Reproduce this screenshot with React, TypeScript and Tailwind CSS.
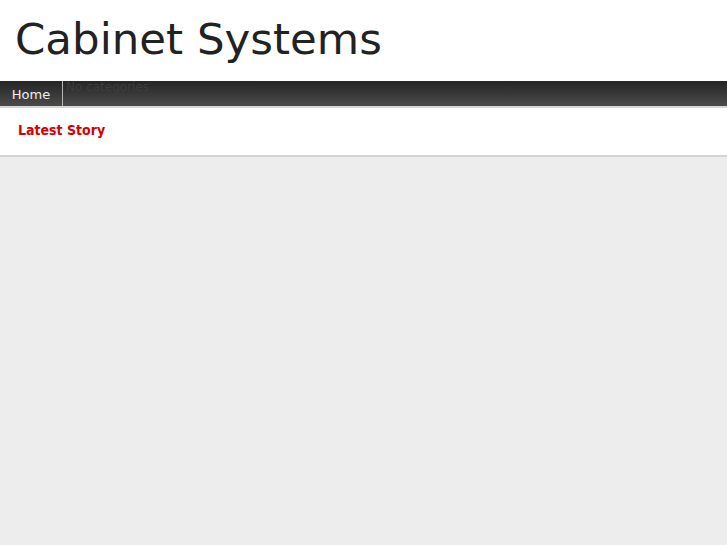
import React from 'react';

const App = () => {
  return (
    <div className="min-h-screen bg-[#ededed] font-['DejaVu_Sans',sans-serif]">
      {/* Header */}
      <header className="bg-white h-[81px] flex items-center px-[15px]">
        <h1 className="text-[43.5px] leading-none text-[#222] pb-[2px]">Cabinet Systems</h1>
      </header>

      {/* Nav bar */}
      <nav className="relative h-[25px] bg-gradient-to-b from-[#252525] to-[#4b4b4b] border-b-2 border-[#d6d6d6] box-content flex">
        <a className="h-full w-[63px] flex items-center justify-center text-[13px] text-[#eeeeee] border-r border-[#b5b5b5] pt-[2px]">
          Home
        </a>
        <span className="absolute left-[66px] top-[-3px] text-[12px] text-[#3d3d3d]">No categories</span>
      </nav>

      {/* Latest story bar */}
      <div className="bg-white h-[47px] border-b-2 border-[#d3d3d3] box-content flex items-start">
        <h2 className="mt-[12px] ml-[18px] text-[14px] font-bold text-[#d40000] font-['DejaVu_Sans_Condensed','DejaVu_Sans',sans-serif]">
          Latest Story
        </h2>
      </div>
    </div>
  );
};

export default App;
